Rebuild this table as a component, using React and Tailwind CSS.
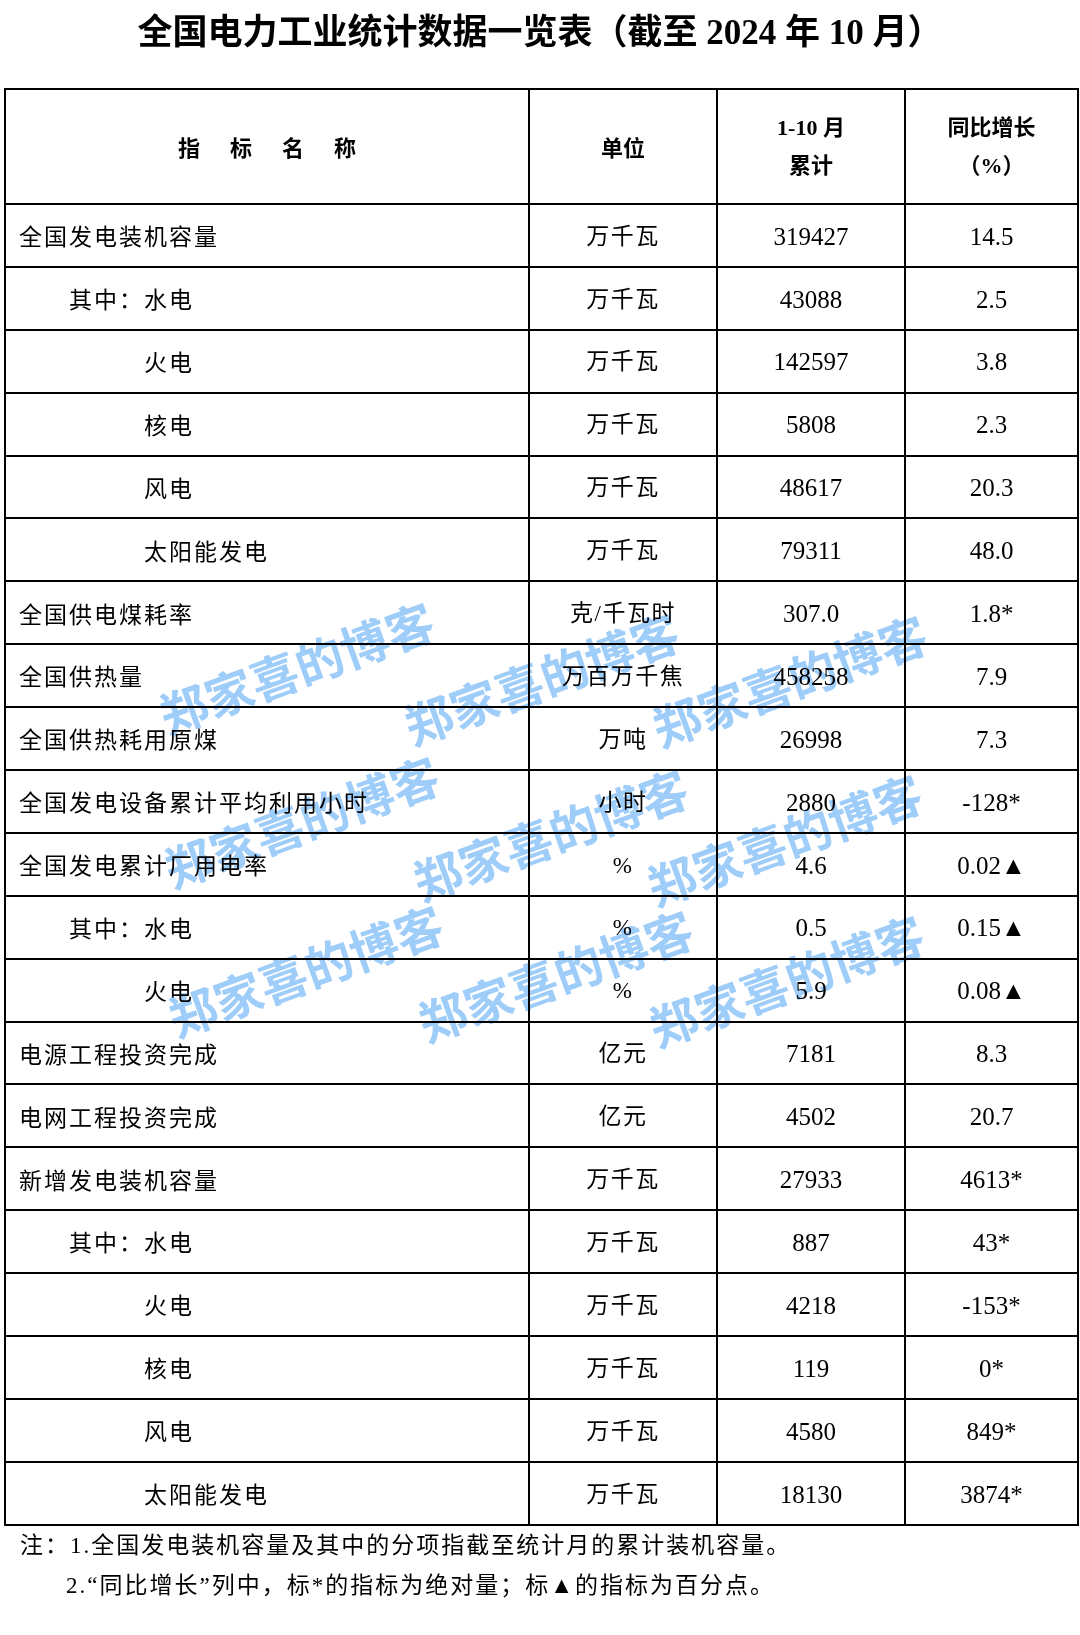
import React from 'react';

const rows = [
    ['全国发电装机容量', 0, '万千瓦', '319427', '14.5'],
    ['其中：水电', 1, '万千瓦', '43088', '2.5'],
    ['火电', 2, '万千瓦', '142597', '3.8'],
    ['核电', 2, '万千瓦', '5808', '2.3'],
    ['风电', 2, '万千瓦', '48617', '20.3'],
    ['太阳能发电', 2, '万千瓦', '79311', '48.0'],
    ['全国供电煤耗率', 0, '克/千瓦时', '307.0', '1.8*'],
    ['全国供热量', 0, '万百万千焦', '458258', '7.9'],
    ['全国供热耗用原煤', 0, '万吨', '26998', '7.3'],
    ['全国发电设备累计平均利用小时', 0, '小时', '2880', '-128*'],
    ['全国发电累计厂用电率', 0, '%', '4.6', '0.02▲'],
    ['其中：水电', 1, '%', '0.5', '0.15▲'],
    ['火电', 2, '%', '5.9', '0.08▲'],
    ['电源工程投资完成', 0, '亿元', '7181', '8.3'],
    ['电网工程投资完成', 0, '亿元', '4502', '20.7'],
    ['新增发电装机容量', 0, '万千瓦', '27933', '4613*'],
    ['其中：水电', 1, '万千瓦', '887', '43*'],
    ['火电', 2, '万千瓦', '4218', '-153*'],
    ['核电', 2, '万千瓦', '119', '0*'],
    ['风电', 2, '万千瓦', '4580', '849*'],
    ['太阳能发电', 2, '万千瓦', '18130', '3874*'],
];

// watermark centres, relative to the table's top-left corner
const marks = [
    [292, 578], [537, 589], [785, 591],
    [297, 732], [546, 745], [780, 750],
    [301, 881], [551, 886], [782, 891],
];

const sans = "font-['Noto_Sans_CJK_SC',sans-serif]";
const serif = "font-['Liberation_Serif','Noto_Sans_CJK_SC',serif]";

function Label({ text, level }) {
    const pad = level === 0 ? 'pl-[13px]' : level === 1 ? 'pl-[63px]' : 'pl-[138px]';
    return <td className={`border-2 border-black ${pad} text-left text-[23px] tracking-[2px] ${sans}`}>{text}</td>;
}

export default function App() {
    return (
        <div className="w-[1080px] h-[1635px] bg-white text-black overflow-hidden">
            <h1 className={`h-[88px] pt-[10px] text-center text-[35px] font-bold leading-[46px] ${serif}`}>
                全国电力工业统计数据一览表（截至 2024 年 10 月）
            </h1>

            <div className="relative ml-[4px] w-[1073px]">
                <table className="w-full border-collapse table-fixed border-2 border-black">
                    <colgroup>
                        <col className="w-[524px]" />
                        <col className="w-[188px]" />
                        <col className="w-[188px]" />
                        <col className="w-[173px]" />
                    </colgroup>
                    <thead>
                        <tr className="h-[115px]">
                            <th className={`border-2 border-black text-[22px] font-bold ${sans}`}>
                                <span className="tracking-[30px] pl-[30px]">指标名称</span>
                            </th>
                            <th className={`border-2 border-black text-[22px] font-bold ${sans}`}>单位</th>
                            <th className={`border-2 border-black text-[22px] font-bold leading-[38px] ${serif}`}>
                                1-10 月<br />累计
                            </th>
                            <th className={`border-2 border-black text-[22px] font-bold leading-[38px] ${serif}`}>
                                同比增长<br />（%）
                            </th>
                        </tr>
                    </thead>
                    <tbody>
                        {rows.map(([name, level, unit, total, growth], i) => (
                            <tr key={i} className="h-[62.9px]">
                                <Label text={name} level={level} />
                                <td className={`border-2 border-black pt-[3px] text-center text-[23px] tracking-[1.5px] ${serif}`}>{unit}</td>
                                <td className={`border-2 border-black pt-[2px] text-center text-[25px] ${serif}`}>{total}</td>
                                <td className={`border-2 border-black pt-[2px] text-center text-[25px] ${serif}`}>{growth}</td>
                            </tr>
                        ))}
                    </tbody>
                </table>

                {/* blog watermark over the table */}
                <div className="pointer-events-none absolute inset-0 mix-blend-multiply">
                    {marks.map(([x, y], i) => (
                        <span
                            key={i}
                            className={`absolute -translate-x-1/2 -translate-y-1/2 -rotate-[20deg] whitespace-nowrap text-[48px] font-bold leading-none text-[#9fcdfa] ${sans}`}
                            style={{ left: x, top: y }}
                        >
                            郑家喜的博客
                        </span>
                    ))}
                </div>
            </div>

            <div className={`pl-[20px] text-[23px] leading-[40px] tracking-[2px] ${serif}`}>
                <p>注：1.全国发电装机容量及其中的分项指截至统计月的累计装机容量。</p>
                <p className="pl-[46px]">2.“同比增长”列中，标*的指标为绝对量；标▲的指标为百分点。</p>
            </div>
        </div>
    );
}
